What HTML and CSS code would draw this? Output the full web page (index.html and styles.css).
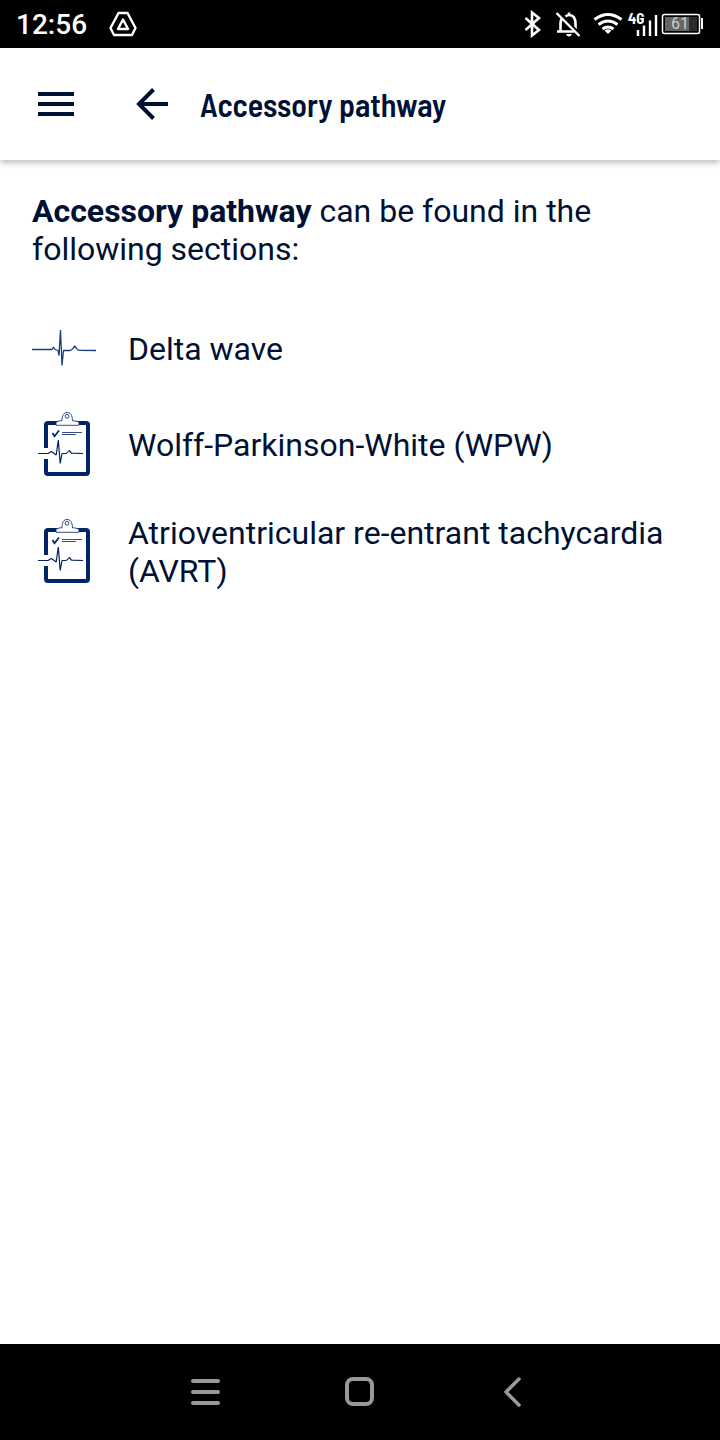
FILE: index.html
```html
<!DOCTYPE html>
<html lang="en">
<head>
<meta charset="utf-8">
<meta name="viewport" content="width=device-width, initial-scale=1">
<title>Accessory pathway</title>
<link rel="stylesheet" href="styles.css">
</head>
<body>
<div class="status-bar">
  <div class="status-group status-left">
    <span class="clock">12:56</span>
    <svg class="icon" width="28" height="26" viewBox="0 0 28 26" fill="none" stroke="#fff" stroke-linejoin="round" aria-hidden="true">
      <path d="M9.500 2h9L26.500 17l-3.500 7H5L1.500 17z" stroke-width="2.400"/>
      <path d="M14 8.500l5 9.500H9z" stroke-width="2.400"/>
    </svg>
  </div>
  <div class="status-group status-right">
    <svg width="180" height="28" viewBox="0 0 180 28" fill="none" stroke="#fff" role="img" aria-label="Bluetooth, silent, Wi-Fi, 4G, battery 61%">
      <path d="M1.500 8L15 20l-7 5.500V2.500L15 8 1.500 20" stroke-width="2.600"/>
      <g transform="translate(4 0)">
        <path d="M35.500 7q-3 2-3 6.500v8M29 21.500h17M37.500 6.500q2-1.500 3.500-1.500c5 0 6.500 4 6.500 9v5M41 2.500v3" stroke-width="2.600"/>
        <path d="M38 24h6q-1 2.500-3 2.500t-3-2.500z" fill="#fff" stroke="none"/>
        <path d="M30.500 2.500l23 23" stroke="#000" stroke-width="2.400"/>
        <path d="M28.500 3l23 23" stroke-width="2.400"/>
        <path d="M66.500 9.500q13.500-10 27 0M70.500 14.500q9.500-7 19 0M74.500 19q5.500-4 11 0" stroke-width="3"/>
        <path d="M76.500 20.500q3.500-2.500 7 0L80 24z" fill="#fff" stroke="none"/>
        <path d="M110 20v6M116 15.500V26M122 10.500V26M128 5v21" stroke-width="2.400"/>
        <text class="network-label" x="100" y="14">4G</text>
        <rect x="134.500" y="4.500" width="37" height="19" rx="2" stroke-width="1.500"/>
        <path d="M137 7h24v14h-24z" fill="#666" stroke="none"/>
        <path d="M161 7h8v14h-8z" fill="#2b2b2b" stroke="none"/>
        <path d="M174 8v11" stroke-width="2"/>
        <text class="battery-label" x="152" y="19">61</text>
      </g>
    </svg>
  </div>
</div>
<header class="app-bar">
  <button class="icon-button" type="button" aria-label="Menu">
    <svg width="36" height="24" viewBox="0 0 36 24" fill="#001133"><path d="M0 0h36v4H0zM0 10h36v4H0zM0 20h36v4H0z"/></svg>
  </button>
  <button class="icon-button" type="button" aria-label="Back">
    <svg width="32" height="32" viewBox="0 0 32 32" fill="none" stroke="#001133" stroke-width="4"><path d="M32 16H4M17.500 1.500L3 16l14.500 14.500"/></svg>
  </button>
  <h1 class="title">Accessory pathway</h1>
</header>
<main class="content">
  <p class="intro"><strong>Accessory pathway</strong> can be found in the following sections:</p>
  <ul class="sections">
    <li><a class="section-link" href="#delta-wave">
      <svg class="section-icon" viewBox="0 0 64 64" fill="none" stroke="#1b3c7c" aria-hidden="true">
        <path d="M0 33.500h20l1.500-2.500 1.500 2.500 3 1 1 5 1.500-25.500L30 49.500l1.500-15H38q2-.500 3.200-2.500l1.500-2 1.500 2q1 2.200 3.300 2.300L64 34.500" stroke-width="1.300" stroke-linejoin="bevel"/>
      </svg>
      <span class="section-label">Delta wave</span></a></li>
    <li><a class="section-link" href="#wpw">
      <svg class="section-icon" viewBox="0 0 64 64" fill="none" stroke="#002466" aria-hidden="true"><g id="clipboard">
        <path d="M14 36V13q0-2 2-2h38q2 0 2 2v47q0 2-2 2H16q-2 0-2-2V47" stroke-width="4"/>
        <path d="M24 13.300V10l4-1.200h2C30 3 32 .500 35 .500S40.500 3 40.500 8.800h2l4.500 1.200v3.300z" fill="#fff" stroke-width=".8"/>
        <circle cx="35" cy="4.300" r="1.900" stroke-width=".8"/>
        <path d="M20.500 21l2 3.200 4.500-5.700" stroke-width="1.700"/>
        <path d="M30 20.500h20M30 22.500h14" stroke-width=".8"/>
        <path d="M6 41.500h10l3.300-2 2.200 1.500 2.700 2L26.300 28l1.900 23.500 1.800-10h4q2-1 3.300-3l2.200 2.700 11.500.3" stroke-width="1.200" stroke-linejoin="bevel"/>
      </g></svg>
      <span class="section-label">Wolff-Parkinson-White (WPW)</span></a></li>
    <li><a class="section-link" href="#avrt">
      <svg class="section-icon" viewBox="0 0 64 64" fill="none" stroke="#002466" aria-hidden="true"><use href="#clipboard"/></svg>
      <span class="section-label">Atrioventricular re-entrant tachycardia (AVRT)</span></a></li>
  </ul>
</main>
<nav class="system-nav" aria-label="System">
  <button class="icon-button" type="button" aria-label="Recent apps">
    <svg width="30" height="30" viewBox="0 0 30 30" fill="none" stroke="#999" stroke-width="4" stroke-linecap="round"><path d="M3 4h25M3 15h25M3 26h25"/></svg>
  </button>
  <button class="icon-button" type="button" aria-label="Home">
    <svg width="30" height="30" viewBox="0 0 30 30" fill="none" stroke="#999" stroke-width="4"><rect x="3" y="2" width="25" height="25" rx="6"/></svg>
  </button>
  <button class="icon-button" type="button" aria-label="Go back">
    <svg width="30" height="30" viewBox="0 0 30 30" fill="none" stroke="#999" stroke-width="3.500" stroke-linecap="round" stroke-linejoin="round"><path d="M21 2L8 15l13 13"/></svg>
  </button>
</nav>
</body>
</html>
```
FILE: styles.css
```css
* {
  box-sizing: border-box;
}

body {
  margin: 0;
  min-height: 100vh;
  display: flex;
  flex-direction: column;
  background: #fff;
  color: #001133;
  font-family: Roboto, sans-serif;
  font-size: 32px;
  line-height: 38px;
}

.status-bar {
  display: flex;
  justify-content: space-between;
  align-items: center;
  height: 48px;
  padding: 0 16px;
  background: #000;
  color: #fff;
}

.status-group {
  display: flex;
  align-items: center;
  gap: 22px;
}

.clock {
  padding-top: 2px;
  font-size: 28px;
  font-weight: 500;
}

.network-label,
.battery-label {
  stroke: none;
}

.network-label {
  fill: #fff;
  font-family: "Barlow Semi Condensed", Roboto, sans-serif;
  font-size: 15px;
  font-weight: 700;
}

.battery-label {
  fill: #ccc;
  font-size: 16px;
  text-anchor: middle;
}

.icon-button {
  display: flex;
  justify-content: center;
  align-items: center;
  flex: none;
  width: 48px;
  height: 48px;
  padding: 0;
  border: 0;
  background: none;
}

.app-bar {
  display: flex;
  align-items: center;
  height: 112px;
  padding: 0 32px;
  box-shadow: 0 3px 6px rgba(0, 0, 0, 0.25);
}

.app-bar .icon-button + .icon-button {
  margin-left: 48px;
}

.title {
  margin: 0 0 0 24px;
  font-family: "Barlow Semi Condensed", Roboto, sans-serif;
  font-size: 32px;
  font-weight: 600;
}

.content {
  flex: 1;
  padding: 32px;
}

.intro {
  margin: 0 0 32px;
}

.sections {
  margin: 0;
  padding: 0;
  list-style: none;
}

.section-link {
  display: flex;
  align-items: center;
  gap: 32px;
  min-height: 96px;
  color: inherit;
  text-decoration: none;
}

.section-icon {
  flex: none;
  width: 64px;
  height: 64px;
}

.section-label {
  padding: 22px 0 20px;
}

.system-nav {
  display: flex;
  justify-content: center;
  align-items: center;
  gap: 106px;
  height: 96px;
  padding-right: 2px;
  background: #000;
}
```
